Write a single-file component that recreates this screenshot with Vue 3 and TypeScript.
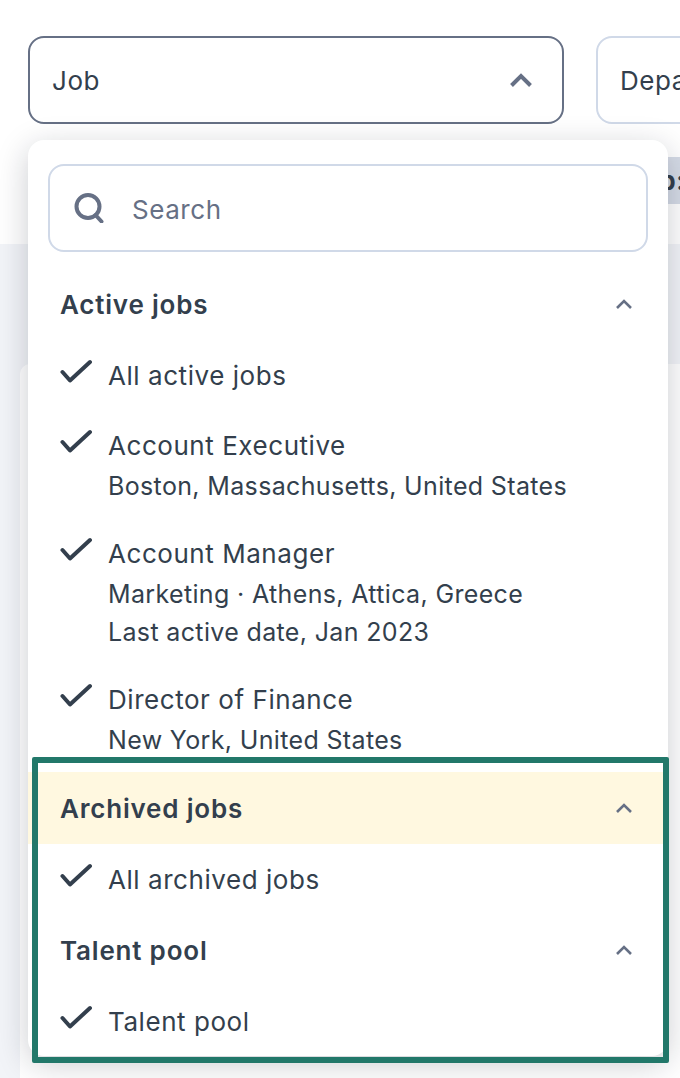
<script setup lang="ts">
interface JobItem {
  title: string
  lines?: string[]
}

const activeJobs: JobItem[] = [
  { title: "All active jobs" },
  { title: "Account Executive", lines: ["Boston, Massachusetts, United States"] },
  { title: "Account Manager", lines: ["Marketing · Athens, Attica, Greece", "Last active date, Jan 2023"] },
  { title: "Director of Finance", lines: ["New York, United States"] },
]
</script>

<template>
  <div class="page">
    <header class="top">
      <div class="filters">
        <div class="select select-open">
          <span>Job</span>
          <svg class="select-caret" width="24" height="16" viewBox="0 0 24 16" fill="none" stroke="#667085" stroke-width="4">
            <path d="M2.5 13.5L12 4l9.5 9.5" />
          </svg>
        </div>
        <div class="select select-dept"><span>Department</span></div>
      </div>
      <div class="summary"><b>Job:</b></div>
    </header>
    <div class="content">
      <div class="card"></div>
    </div>

    <div class="dropdown">
      <div class="search">
        <svg width="32" height="30" viewBox="0 0 32 30" fill="none" stroke="#667085" stroke-width="4">
          <circle cx="14" cy="13.5" r="11.5" />
          <path d="M21.5 22l6 6.5" stroke-linecap="round" />
        </svg>
        <span class="search-text">Search</span>
      </div>
      <div class="scroll">
        <div class="group-head">
          <span>Active jobs</span>
          <svg class="chev" width="18" height="12" viewBox="0 0 18 12" fill="none" stroke="#667085" stroke-width="2.6">
            <path d="M2 10l7-7 7 7" />
          </svg>
        </div>
        <div v-for="job in activeJobs" :key="job.title" class="item">
          <svg class="check" width="34" height="26" viewBox="0 0 34 26" fill="none" stroke="#333f4d" stroke-width="4" stroke-linecap="round" stroke-linejoin="round">
            <path d="M2.5 13l7.5 8.5L30 3" />
          </svg>
          <div class="item-text">
            <div class="item-title">{{ job.title }}</div>
            <div v-for="line in job.lines" :key="line" class="item-sub">{{ line }}</div>
          </div>
        </div>
      </div>
      <div class="footer">
        <div class="group-head group-head-hl">
          <span>Archived jobs</span>
          <svg class="chev" width="18" height="12" viewBox="0 0 18 12" fill="none" stroke="#667085" stroke-width="2.6">
            <path d="M2 10l7-7 7 7" />
          </svg>
        </div>
        <div class="item">
          <svg class="check" width="34" height="26" viewBox="0 0 34 26" fill="none" stroke="#333f4d" stroke-width="4" stroke-linecap="round" stroke-linejoin="round">
            <path d="M2.5 13l7.5 8.5L30 3" />
          </svg>
          <div class="item-text"><div class="item-title">All archived jobs</div></div>
        </div>
        <div class="group-head">
          <span>Talent pool</span>
          <svg class="chev" width="18" height="12" viewBox="0 0 18 12" fill="none" stroke="#667085" stroke-width="2.6">
            <path d="M2 10l7-7 7 7" />
          </svg>
        </div>
        <div class="item">
          <svg class="check" width="34" height="26" viewBox="0 0 34 26" fill="none" stroke="#333f4d" stroke-width="4" stroke-linecap="round" stroke-linejoin="round">
            <path d="M2.5 13l7.5 8.5L30 3" />
          </svg>
          <div class="item-text"><div class="item-title">Talent pool</div></div>
        </div>
      </div>
      <div class="annotation"></div>
    </div>
  </div>
</template>

<style>
html,
body {
  margin: 0;
  overflow: hidden;
}
</style>

<style scoped>
.page {
  position: relative;
  width: 680px;
  height: 1078px;
  overflow: hidden;
  background: #f2f4f8;
  font-family: Inter, "Liberation Sans", sans-serif;
  font-size: 26px;
  letter-spacing: 0.55px;
  color: #333f4d;
}

.top {
  height: 244px;
  box-sizing: border-box;
  padding: 36px 0 0 28px;
  background: #fff;
}

.filters {
  display: flex;
  gap: 32px;
}

.select {
  flex: none;
  display: flex;
  align-items: center;
  justify-content: space-between;
  box-sizing: border-box;
  width: 536px;
  height: 88px;
  padding: 0 29px 0 22px;
  border: 2px solid #d0d9e8;
  border-radius: 16px;
  background: #fff;
}

.select-open {
  border-color: #667085;
}

.select-dept {
  width: 300px;
}

.summary {
  margin: 33px 0 0 560px;
  height: 47px;
  line-height: 47px;
  padding-left: 39px;
  background: #d5dbe6;
  white-space: nowrap;
}

.content {
  padding: 120px 0 0 20px;
}

.card {
  height: 800px;
  border-radius: 10px 0 0 10px;
  background: #fff;
}

.dropdown {
  position: absolute;
  left: 28px;
  top: 140px;
  width: 640px;
  height: 916px;
  border-radius: 16px;
  background: #fff;
  box-shadow: 0 8px 32px rgba(16, 24, 40, 0.22);
}

.search {
  display: flex;
  align-items: center;
  gap: 26px;
  box-sizing: border-box;
  height: 88px;
  margin: 24px 20px 16px;
  padding: 0 24px;
  border: 2px solid #d0d9e8;
  border-radius: 16px;
  color: #667085;
}

.search-text {
  padding-top: 2px;
}

.scroll {
  height: 488px;
  overflow: hidden;
}

.footer {
  padding-top: 16px;
}

.group-head {
  display: flex;
  align-items: center;
  justify-content: space-between;
  height: 72px;
  padding: 0 35px 0 32px;
  font-weight: 600;
  letter-spacing: 0.8px;
}

.group-head-hl {
  background: #fff8e0;
}

.item {
  display: flex;
  gap: 14px;
  padding: 17px 0 13px 32px;
}

.item:has(.item-text > :only-child) {
  padding-bottom: 15px;
}

.check {
  flex: none;
  margin-top: 2px;
}

.item-title,
.item-sub {
  line-height: 38px;
}

.item-title + .item-sub {
  margin-top: 2px;
}

.item-sub {
  font-size: 25px;
  letter-spacing: 0.35px;
}

.annotation {
  position: absolute;
  left: 4px;
  top: 617px;
  right: -1px;
  height: 306px;
  box-sizing: border-box;
  border: 6px solid #22786a;
  border-radius: 2px;
}
</style>
